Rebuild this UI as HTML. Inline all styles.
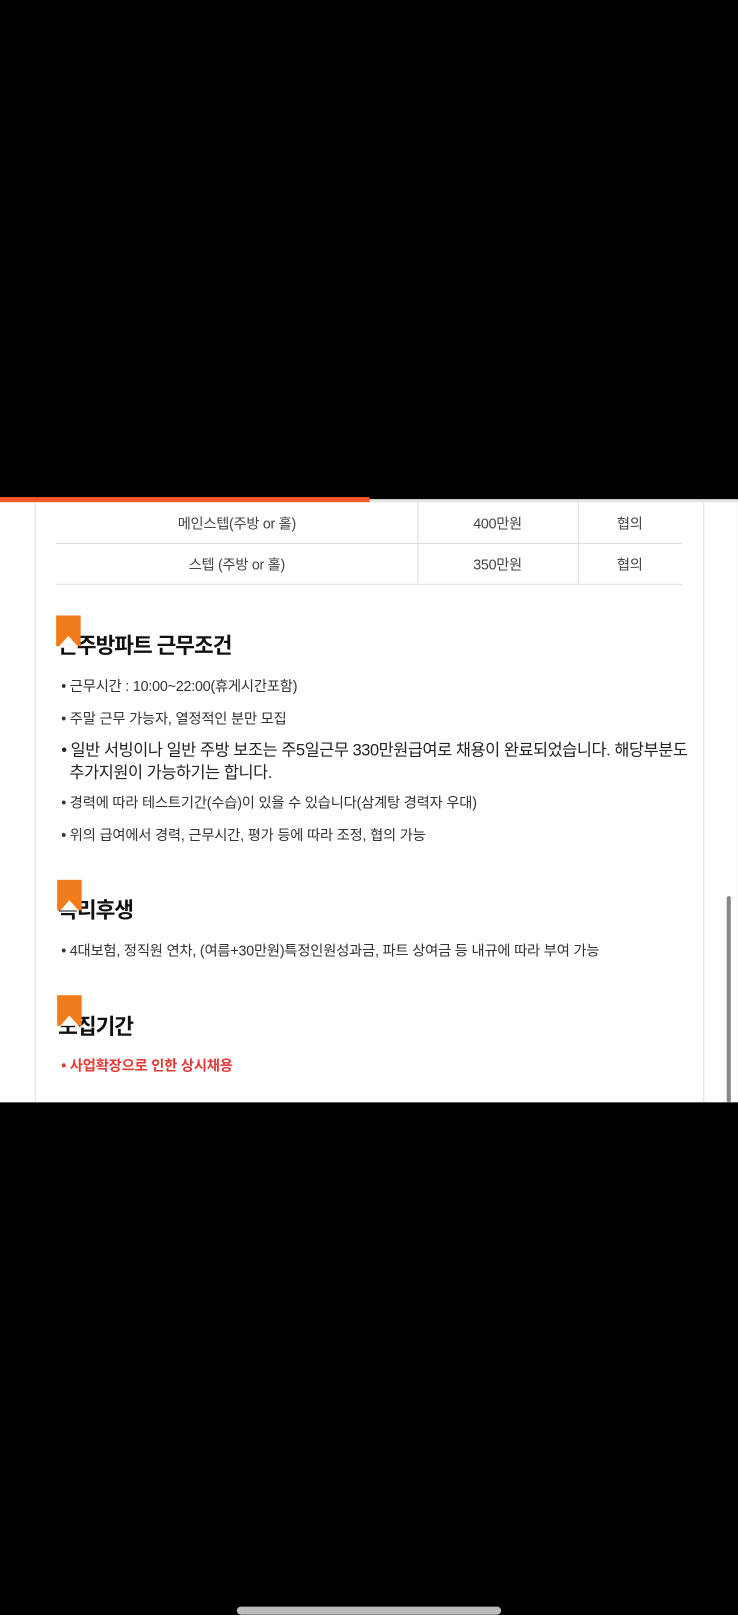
<!DOCTYPE html>
<html><head><meta charset="utf-8"><style>
*{margin:0;padding:0;box-sizing:border-box}
body{width:738px;height:1600px;background:#000;position:relative;overflow:hidden;font-family:"Liberation Sans","Noto Sans CJK KR",sans-serif;color:#333}
#w{position:absolute;left:0;top:0;width:723px;height:1568px;transform:scale(1.0207);transform-origin:0 0}
.a{position:absolute}
.page{left:0;top:491px;width:723px;height:589px;background:#fff}
.t{white-space:nowrap}
.cell{font-size:14px;letter-spacing:-0.3px;color:#444;text-align:center}
.h{font-size:21px;font-weight:bold;color:#111;letter-spacing:-1px}
.li{font-size:14px;letter-spacing:-0.2px;color:#333}
.bm{width:24px;height:30px;background:#f07c1c}
.bm:after{content:"";position:absolute;left:3px;bottom:0;border-left:9px solid transparent;border-right:9px solid transparent;border-bottom:10px solid #fff}
</style></head><body><div id="w">
<div class="a page"></div>
<div class="a" style="left:0;top:487px;width:362px;height:5px;background:#f15a24"></div>
<div class="a" style="left:362px;top:489px;width:361px;height:3px;background:#e4e4e4"></div>
<div class="a" style="left:34px;top:492px;width:1px;height:588px;background:#ddd"></div>
<div class="a" style="left:689px;top:492px;width:1px;height:588px;background:#ddd"></div>
<div class="a" style="left:712px;top:878px;width:4px;height:202px;background:#888;border-radius:2px"></div>
<div class="a" style="left:55px;top:532px;width:613px;height:1px;background:#ddd"></div>
<div class="a" style="left:55px;top:572px;width:613px;height:1px;background:#ddd"></div>
<div class="a" style="left:409px;top:492px;width:1px;height:80px;background:#ddd"></div>
<div class="a" style="left:566px;top:492px;width:1px;height:80px;background:#ddd"></div>
<div class="a t cell" style="left:55px;top:503px;width:354px">메인스텝(주방 or 홀)</div>
<div class="a t cell" style="left:409px;top:503px;width:157px">400만원</div>
<div class="a t cell" style="left:566px;top:503px;width:102px">협의</div>
<div class="a t cell" style="left:55px;top:543px;width:354px">스텝 (주방 or 홀)</div>
<div class="a t cell" style="left:409px;top:543px;width:157px">350만원</div>
<div class="a t cell" style="left:566px;top:543px;width:102px">협의</div>
<div class="a t h" style="left:57px;top:617px">근주방파트 근무조건</div>
<div class="a bm" style="left:55px;top:603px"></div>
<div class="a t li" style="left:60px;top:662px">• 근무시간 : 10:00~22:00(휴게시간포함)</div>
<div class="a t li" style="left:60px;top:694px">• 주말 근무 가능자, 열정적인 분만 모집</div>
<div class="a t" style="left:60px;top:725px;font-size:16px;color:#222;letter-spacing:-0.4px;line-height:22px">• 일반 서빙이나 일반 주방 보조는 주5일근무 330만원급여로 채용이 완료되었습니다. 해당부분도<br>&nbsp;&nbsp;추가지원이 가능하기는 합니다.</div>
<div class="a t li" style="left:60px;top:776px">• 경력에 따라 테스트기간(수습)이 있을 수 있습니다(삼계탕 경력자 우대)</div>
<div class="a t li" style="left:60px;top:808px">• 위의 급여에서 경력, 근무시간, 평가 등에 따라 조정, 협의 가능</div>
<div class="a t h" style="left:57px;top:876px">복리후생</div>
<div class="a bm" style="left:56px;top:862px"></div>
<div class="a t li" style="left:60px;top:921px">• 4대보험, 정직원 연차, (여름+30만원)특정인원성과금, 파트 상여금 등 내규에 따라 부여 가능</div>
<div class="a t h" style="left:57px;top:990px">모집기간</div>
<div class="a bm" style="left:56px;top:975px"></div>
<div class="a t li" style="left:60px;top:1034px;color:#e53935;font-weight:bold">• 사업확장으로 인한 상시채용</div>
<div class="a" style="left:232px;top:1574px;width:259px;height:8px;background:#bbb;border-radius:4px"></div>
</div></body></html>
